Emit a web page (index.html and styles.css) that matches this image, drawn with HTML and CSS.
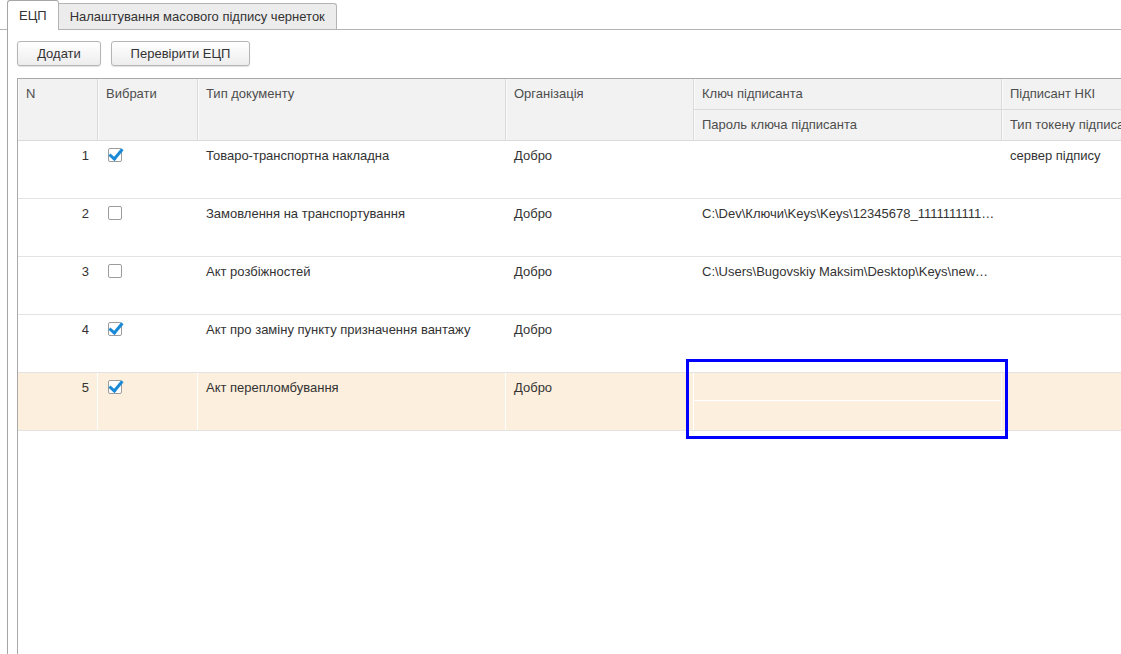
FILE: index.html
```html
<!DOCTYPE html>
<html lang="uk">
<head>
    <meta charset="UTF-8">
    <title>ЕЦП</title>
    <link rel="stylesheet" href="styles.css">
</head>
<body>
    <div class="tabs">
        <div class="tab active">ЕЦП</div>
        <div class="tab">Налаштування масового підпису чернеток</div>
    </div>

    <div class="panel">
        <div class="toolbar">
            <button class="btn btn-add">Додати</button>
            <button class="btn btn-check">Перевірити ЕЦП</button>
        </div>

        <div class="grid">
            <!-- шапка таблиці -->
            <div class="grid-head">
                <div class="hc span2">N</div>
                <div class="hc span2">Вибрати</div>
                <div class="hc span2">Тип документу</div>
                <div class="hc span2">Організація</div>
                <div class="hc top">Ключ підписанта</div>
                <div class="hc top">Підписант НКІ</div>
                <div class="hc bottom key-col">Пароль ключа підписанта</div>
                <div class="hc bottom sign-col">Тип токену підписанта</div>
            </div>

            <!-- рядки -->
            <div class="row">
                <div class="cell num">1</div>
                <div class="cell"><span class="cb checked"></span></div>
                <div class="cell">Товаро-транспортна накладна</div>
                <div class="cell">Добро</div>
                <div class="cell key"><div class="sub"></div><div class="sub"></div></div>
                <div class="cell">сервер підпису</div>
            </div>
            <div class="row">
                <div class="cell num">2</div>
                <div class="cell"><span class="cb"></span></div>
                <div class="cell">Замовлення на транспортування</div>
                <div class="cell">Добро</div>
                <div class="cell key"><div class="sub">C:\Dev\Ключи\Keys\Keys\12345678_1111111111…</div><div class="sub"></div></div>
                <div class="cell"></div>
            </div>
            <div class="row">
                <div class="cell num">3</div>
                <div class="cell"><span class="cb"></span></div>
                <div class="cell">Акт розбіжностей</div>
                <div class="cell">Добро</div>
                <div class="cell key"><div class="sub">C:\Users\Bugovskiy Maksim\Desktop\Keys\new…</div><div class="sub"></div></div>
                <div class="cell"></div>
            </div>
            <div class="row">
                <div class="cell num">4</div>
                <div class="cell"><span class="cb checked"></span></div>
                <div class="cell">Акт про заміну пункту призначення вантажу</div>
                <div class="cell">Добро</div>
                <div class="cell key"><div class="sub"></div><div class="sub"></div></div>
                <div class="cell"></div>
            </div>
            <div class="row selected">
                <div class="cell num">5</div>
                <div class="cell"><span class="cb checked"></span></div>
                <div class="cell">Акт перепломбування</div>
                <div class="cell">Добро</div>
                <div class="cell key"><div class="sub"></div><div class="sub"></div></div>
                <div class="cell"></div>
            </div>
        </div>
    </div>

    <!-- виділення поверх таблиці -->
    <div class="highlight"></div>
</body>
</html>
```

FILE: styles.css
```css
/* Базові стилі */
html, body {
    height: 100%;
}

body {
    margin: 0;
    font-family: "Liberation Sans", Arial, sans-serif;
    font-size: 13px;
    color: #333;
    background: #fff;
    overflow: hidden;
    position: relative;
}

/* Вкладки */
.tabs {
    display: flex;
    align-items: flex-end;
    height: 29px;
    padding-left: 7px;
    border-bottom: 1px solid #b4b4b4;
}

.tab {
    height: 25px;
    line-height: 25px;
    padding: 0 11px;
    background: #ececec;
    border: 1px solid #b4b4b4;
    border-bottom: none;
    border-left: none;
    border-radius: 0 3px 0 0;
    color: #333;
}

.tab.active {
    height: 29px;
    line-height: 30px;
    padding: 0 11px;
    background: #fff;
    border-left: 1px solid #a6a6a6;
    border-top-color: #a6a6a6;
    border-right: 1px solid #b4b4b4;
    border-radius: 3px 3px 0 0;
    margin-bottom: -1px;
}

/* Панель вкладки */
.panel {
    margin-left: 7px;
    border-left: 1px solid #a6a6a6;
    height: calc(100% - 30px);
    padding-left: 9px;
}

.toolbar {
    display: flex;
    gap: 10px;
    padding-top: 11px;
    box-sizing: border-box;
    height: 48px;
}

.btn {
    height: 25px;
    font-family: inherit;
    font-size: 13px;
    color: #333;
    background: linear-gradient(#ffffff, #ededed);
    border: 1px solid #b5b5b5;
    border-radius: 3px;
    box-shadow: 0 1px 1px rgba(0, 0, 0, 0.12);
    padding: 0;
}

.btn-add {
    width: 84px;
}

.btn-check {
    width: 139px;
}

/* Таблиця */
.grid {
    border-top: 1px solid #a9a9a9;
    border-left: 1px solid #a9a9a9;
    height: calc(100% - 48px);
    width: 1300px;
}

.grid-head,
.row {
    display: grid;
    grid-template-columns: 80px 100px 308px 188px 308px 260px;
}

.grid-head {
    grid-template-rows: 31px 30px;
    background: #f2f2f2;
    border-bottom: 1px solid #d9d9d9;
    color: #4d4d4d;
}

.hc {
    box-sizing: border-box;
    padding: 7px 8px 0 8px;
    line-height: 16px;
    border-right: 1px solid #dadada;
    box-shadow: inset 1px 0 #fbfbfb;
    white-space: nowrap;
    overflow: hidden;
}

.hc.span2 {
    grid-row: span 2;
}

.hc.top {
    border-bottom: 1px solid #dadada;
}

.key-col {
    grid-column: 5;
    grid-row: 2;
}

.sign-col {
    grid-column: 6;
    grid-row: 2;
}

.row {
    height: 58px;
    box-sizing: border-box;
    border-bottom: 1px solid #e3e3e3;
}

.row.selected {
    background: #fdefdd;
}

.cell {
    box-sizing: border-box;
    padding: 7px 8px 0 8px;
    line-height: 16px;
    border-right: 1px solid #fff;
    white-space: nowrap;
    overflow: hidden;
}

.cell.num {
    text-align: right;
}

.cell.key {
    padding: 0;
}

.sub {
    height: 28px;
    box-sizing: border-box;
    padding: 7px 8px 0 8px;
    overflow: hidden;
}

.sub:first-child {
    border-bottom: 1px solid #fff;
}

/* Прапорці */
.cb {
    display: block;
    width: 14px;
    height: 14px;
    margin-left: 2px;
    box-sizing: border-box;
    border: 1px solid #9c9c9c;
    border-radius: 2px;
    background: #fff;
    position: relative;
}

.cb.checked::after {
    content: "";
    position: absolute;
    left: 3px;
    top: -3px;
    width: 5px;
    height: 11px;
    border-right: 3px solid #1a8ad6;
    border-bottom: 3px solid #1a8ad6;
    transform: rotate(40deg);
}

/* Синя рамка поверх */
.highlight {
    position: absolute;
    left: 686px;
    top: 359px;
    width: 322px;
    height: 80px;
    box-sizing: border-box;
    border: 3px solid #0000ff;
}
```
